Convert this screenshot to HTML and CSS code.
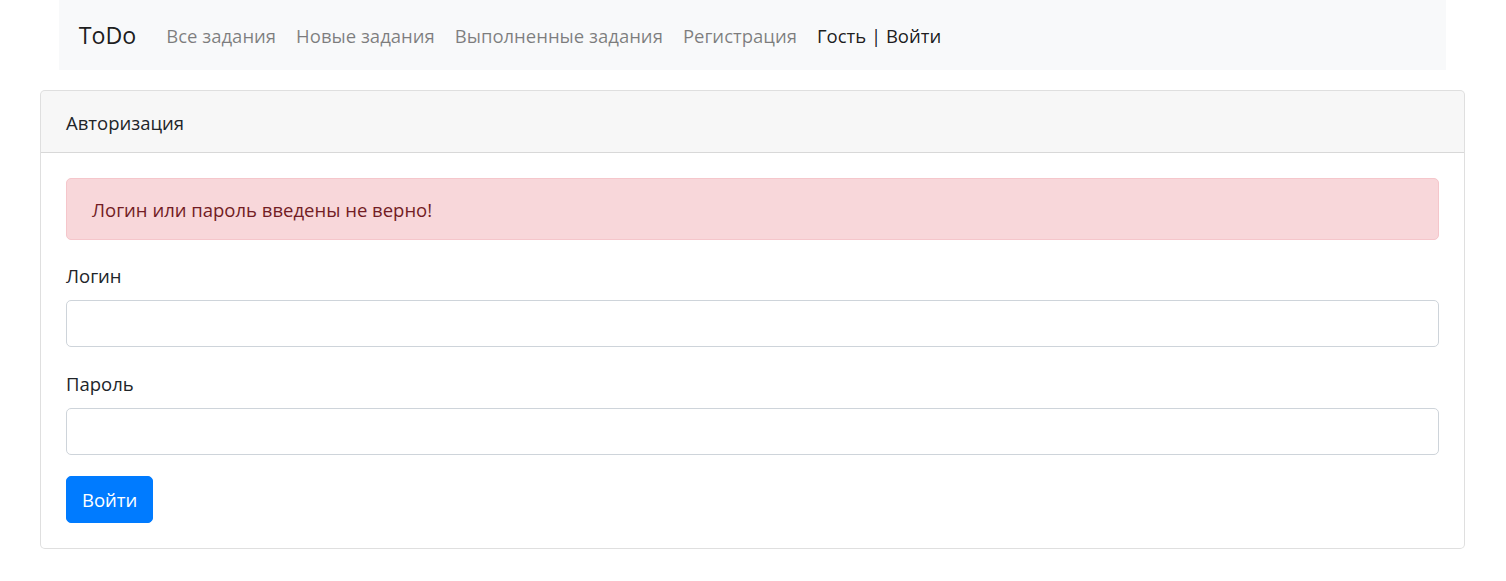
FILE: index.html
```html
<!DOCTYPE html>
<html lang="ru">
<head>
<meta charset="utf-8">
<title>ToDo</title>
<link rel="stylesheet" href="styles.css">
</head>
<body>
<div class="page">
  <div class="nav-wrap">
    <nav class="navbar">
      <a class="brand" href="#">ToDo</a>
      <ul class="nav">
        <li><a class="nav-link" href="#">Все задания</a></li>
        <li><a class="nav-link" href="#">Новые задания</a></li>
        <li><a class="nav-link" href="#">Выполненные задания</a></li>
        <li><a class="nav-link" href="#">Регистрация</a></li>
        <li><a class="nav-link active" href="#">Гость | Войти</a></li>
      </ul>
    </nav>
  </div>
  <div class="card">
    <div class="card-header">Авторизация</div>
    <div class="card-body">
      <div class="alert">Логин или пароль введены не верно!</div>
      <form class="form">
        <div class="form-group">
          <label class="label" for="login">Логин</label>
          <input class="input" type="text" id="login">
        </div>
        <div class="form-group">
          <label class="label" for="password">Пароль</label>
          <input class="input" type="password" id="password">
        </div>
        <button class="btn" type="submit">Войти</button>
      </form>
    </div>
  </div>
</div>
</body>
</html>
```
FILE: styles.css
```css
* { box-sizing: border-box; }
html, body { margin: 0; padding: 0; }
body {
  font-family: "Open Sans", "Noto Sans", sans-serif;
  font-size: 18.5px;
  line-height: 30px;
  color: #212529;
  background: #fff;
}
.page {
  margin: 0 41px 0 40px;
}
.nav-wrap {
  padding: 0 18.75px;
}
.navbar {
  display: flex;
  align-items: center;
  background: #f8f9fa;
  padding: 10px 20px;
  height: 70px;
}
.brand {
  font-size: 23.2px;
  line-height: 37.5px;
  color: rgba(0,0,0,.9);
  text-decoration: none;
  margin-right: 20px;
  padding: 7px 0 5.5px;
}
.nav {
  display: flex;
  list-style: none;
  margin: 0;
  padding: 0;
}
.nav-link {
  display: block;
  padding: 11px 10px 9px;
  color: rgba(0,0,0,.5);
  text-decoration: none;
}
.nav-link.active { color: rgba(0,0,0,.9); }
.card {
  margin-top: 20px;
  border: 1px solid rgba(0,0,0,.125);
  border-radius: 5px;
  background: #fff;
}
.card-header {
  padding: 17px 25px 14px;
  background: rgba(0,0,0,.03);
  border-bottom: 1px solid rgba(0,0,0,.125);
  border-radius: 4px 4px 0 0;
}
.card-body {
  padding: 25px;
}
.alert {
  padding: 16px 25px 14px;
  margin-bottom: 20px;
  border: 1px solid #f5c6cb;
  border-radius: 5px;
  background: #f8d7da;
  color: #721c24;
}
.form-group {
  margin-bottom: 21px;
}
.label {
  display: inline-block;
  margin-bottom: 10px;
  padding-top: 1px;
}
.input {
  display: block;
  width: 100%;
  height: 47px;
  margin-top: -1px;
  padding: 7.5px 15px;
  font: inherit;
  color: #495057;
  background: #fff;
  border: 1px solid #ced4da;
  border-radius: 5px;
}
.btn {
  display: inline-block;
  font: inherit;
  height: 47px;
  padding: 8px 15px 7px;
  color: #fff;
  background: #007bff;
  border: 1px solid #007bff;
  border-radius: 5px;
}
```
